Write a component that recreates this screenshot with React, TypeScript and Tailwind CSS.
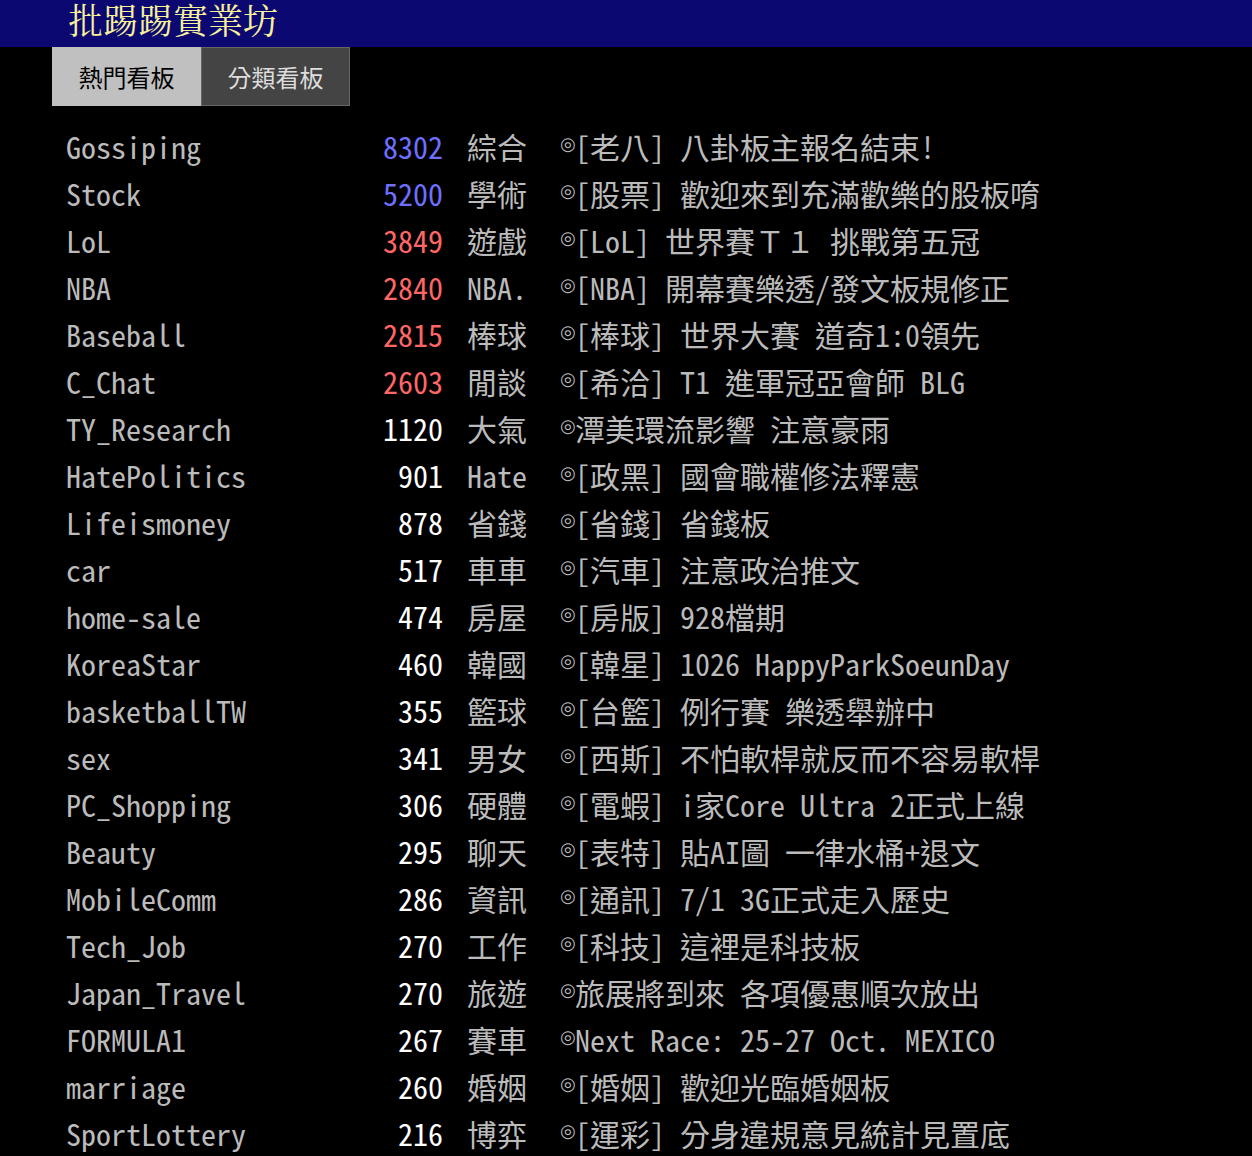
import React from "react";

type Board = {
  name: string;
  count: number;
  cls: string;
  title: string;
};

const boards: Board[] = [
  { name: "Gossiping", count: 8302, cls: "綜合", title: "[老八] 八卦板主報名結束!" },
  { name: "Stock", count: 5200, cls: "學術", title: "[股票] 歡迎來到充滿歡樂的股板唷" },
  { name: "LoL", count: 3849, cls: "遊戲", title: "[LoL] 世界賽Ｔ１ 挑戰第五冠" },
  { name: "NBA", count: 2840, cls: "NBA.", title: "[NBA] 開幕賽樂透/發文板規修正" },
  { name: "Baseball", count: 2815, cls: "棒球", title: "[棒球] 世界大賽 道奇1:0領先" },
  { name: "C_Chat", count: 2603, cls: "閒談", title: "[希洽] T1 進軍冠亞會師 BLG" },
  { name: "TY_Research", count: 1120, cls: "大氣", title: "潭美環流影響 注意豪雨" },
  { name: "HatePolitics", count: 901, cls: "Hate", title: "[政黑] 國會職權修法釋憲" },
  { name: "Lifeismoney", count: 878, cls: "省錢", title: "[省錢] 省錢板" },
  { name: "car", count: 517, cls: "車車", title: "[汽車] 注意政治推文" },
  { name: "home-sale", count: 474, cls: "房屋", title: "[房版] 928檔期" },
  { name: "KoreaStar", count: 460, cls: "韓國", title: "[韓星] 1026 HappyParkSoeunDay" },
  { name: "basketballTW", count: 355, cls: "籃球", title: "[台籃] 例行賽 樂透舉辦中" },
  { name: "sex", count: 341, cls: "男女", title: "[西斯] 不怕軟桿就反而不容易軟桿" },
  { name: "PC_Shopping", count: 306, cls: "硬體", title: "[電蝦] i家Core Ultra 2正式上線" },
  { name: "Beauty", count: 295, cls: "聊天", title: "[表特] 貼AI圖 一律水桶+退文" },
  { name: "MobileComm", count: 286, cls: "資訊", title: "[通訊] 7/1 3G正式走入歷史" },
  { name: "Tech_Job", count: 270, cls: "工作", title: "[科技] 這裡是科技板" },
  { name: "Japan_Travel", count: 270, cls: "旅遊", title: "旅展將到來 各項優惠順次放出" },
  { name: "FORMULA1", count: 267, cls: "賽車", title: "Next Race: 25-27 Oct. MEXICO" },
  { name: "marriage", count: 260, cls: "婚姻", title: "[婚姻] 歡迎光臨婚姻板" },
  { name: "SportLottery", count: 216, cls: "博弈", title: "[運彩] 分身違規意見統計見置底" },
];

function countColor(n: number) {
  if (n >= 5000) return "text-[#6f6fff]";
  if (n >= 2000) return "text-[#ff6666]";
  return "text-white";
}

function BoardRow({ b }: { b: Board }) {
  return (
    <div className="flex h-[47px] items-center whitespace-pre">
      <div className="w-[314px] pl-[14px] text-[#bbbbbb]">{b.name}</div>
      <div className={`w-[77px] text-right ${countColor(b.count)}`}>{b.count}</div>
      <div className="ml-[24px] w-[93px] text-[#bbbbbb]">{b.cls}</div>
      <div className="flex items-center text-[#bbbbbb]">
        <span className="inline-block w-[15px] -translate-y-[2px] text-center font-['DejaVu_Sans',sans-serif] text-[18px]">◎</span>
        {b.title}
      </div>
    </div>
  );
}

export default function App() {
  return (
    <div className="min-h-[1156px] bg-black font-['Noto_Sans_CJK_TC',sans-serif]">
      {/* top bar */}
      <div className="h-[47px] overflow-hidden bg-[#0b0872] pl-[68px]">
        <div className="-mt-[3px] font-['Noto_Serif_CJK_TC','Noto_Sans_CJK_TC',serif] text-[35px] leading-[44px] text-[#f7f29a]">
          批踢踢實業坊
        </div>
      </div>

      <div className="pl-[52px]">
        {/* tabs */}
        <div className="flex">
          <div className="flex h-[59px] w-[149px] items-center justify-center bg-[#c0c0c0] text-[24px] text-black">
            熱門看板
          </div>
          <div className="flex h-[59px] w-[149px] items-center justify-center border border-[#666666] bg-[#444444] text-[24px] text-[#dddddd]">
            分類看板
          </div>
        </div>

        {/* board list */}
        <div className="mt-[16px] font-['Noto_Sans_Mono_CJK_TC','Noto_Sans_Mono_CJK_JP','Liberation_Mono',monospace] text-[30px] leading-none">
          {boards.map((b) => (
            <BoardRow key={b.name} b={b} />
          ))}
        </div>
      </div>
    </div>
  );
}
